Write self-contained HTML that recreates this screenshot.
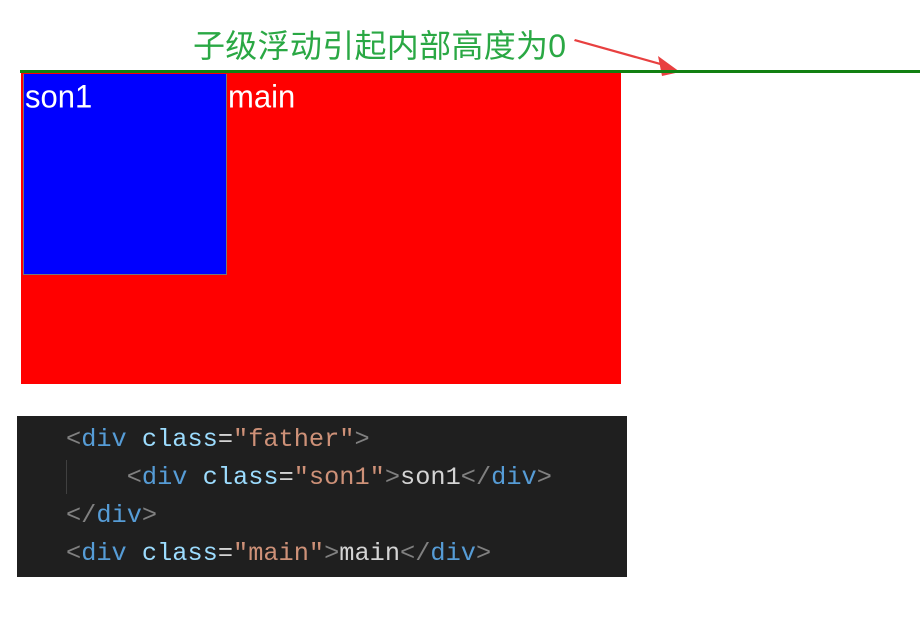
<!DOCTYPE html>
<html><head><meta charset="utf-8"><style>
body{margin:0;width:920px;height:621px;background:#fff;position:relative;overflow:hidden;font-family:"Liberation Sans","Noto Sans CJK SC",sans-serif}
.t{position:absolute;left:193px;top:26px;font-size:32px;color:#2aa844;line-height:40px;white-space:nowrap;letter-spacing:0.3px}
.g{position:absolute;left:20px;top:70px;width:900px;height:3px;background:#118011}
.r{position:absolute;left:21px;top:73px;width:600px;height:311px;background:#f00}
.b{position:absolute;left:23px;top:74px;width:202px;height:200px;background:#00f;border:1px solid #777;border-top:none}
.w{position:absolute;color:#fff;font-size:31px;line-height:34px;transform:scaleY(1.05)}
.c{position:absolute;left:17px;top:416px;width:610px;height:161px;background:#1f1f1f;font-family:"Liberation Mono",monospace;font-size:25.3px;color:#d4d4d4}
.c div{position:absolute;left:49px;white-space:pre;line-height:30px}
.p{color:#808080}.k{color:#569cd6}.a{color:#9cdcfe}.s{color:#ce9178}
</style></head><body>
<div class="t">子级浮动引起内部高度为0</div>
<svg style="position:absolute;left:0;top:0" width="920" height="100"><polygon points="575,39 668,65 667,67 574,41" fill="#e84040"/><polygon points="680,72 658,56 662,76" fill="#e84040"/></svg>
<div class="g"></div>
<div class="r"></div>
<div class="b"></div>
<div class="w" style="left:25px;top:80px">son1</div>
<div class="w" style="left:228px;top:80px">main</div>
<div class="c">
<div style="top:9px"><span class="p">&lt;</span><span class="k">div</span> <span class="a">class</span>=<span class="s">"father"</span><span class="p">&gt;</span></div>
<div style="top:44px;left:49px;width:1px;height:34px;background:#404040"></div>
<div style="top:47px">    <span class="p">&lt;</span><span class="k">div</span> <span class="a">class</span>=<span class="s">"son1"</span><span class="p">&gt;</span>son1<span class="p">&lt;/</span><span class="k">div</span><span class="p">&gt;</span></div>
<div style="top:85px"><span class="p">&lt;/</span><span class="k">div</span><span class="p">&gt;</span></div>
<div style="top:123px"><span class="p">&lt;</span><span class="k">div</span> <span class="a">class</span>=<span class="s">"main"</span><span class="p">&gt;</span>main<span class="p">&lt;/</span><span class="k">div</span><span class="p">&gt;</span></div>
</div>
</body></html>
